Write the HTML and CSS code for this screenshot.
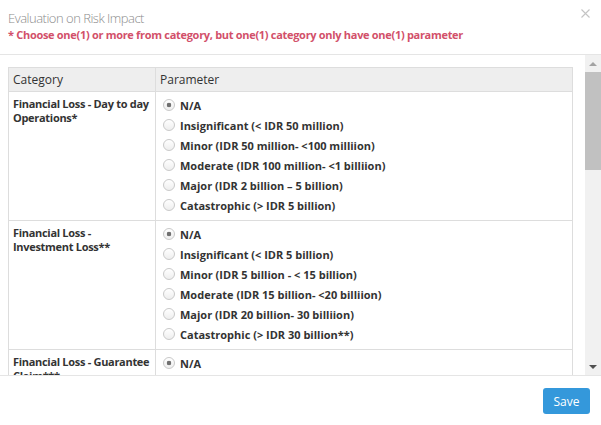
FILE: index.html
```html
<!DOCTYPE html>
<html lang="en">
<head>
<meta charset="utf-8">
<title>Evaluation on Risk Impact</title>
<link rel="stylesheet" href="styles.css">
</head>
<body>
<div class="modal">
  <div class="modal-header">
    <div class="titles">
      <h4 class="modal-title">Evaluation on Risk Impact</h4>
      <p class="modal-note">* Choose one(1) or more from category, but one(1) category only have one(1) parameter</p>
    </div>
    <button class="close" aria-label="Close">
      <svg width="9" height="9" viewBox="0 0 9 9"><path d="M0.5 0.5 L8.5 8.5 M8.5 0.5 L0.5 8.5" stroke="#c4c4c4" stroke-width="1.1" fill="none"/></svg>
    </button>
  </div>
  <div class="modal-body">
    <div class="viewport">
      <table class="risk-table">
        <thead>
          <tr><th class="col-cat">Category</th><th>Parameter</th></tr>
        </thead>
        <tbody>
          <tr>
            <td class="cat">Financial Loss - Day to day Operations*</td>
            <td>
              <label class="opt"><input type="radio" name="r1" checked> N/A</label>
              <label class="opt"><input type="radio" name="r1"> Insignificant (&lt; IDR 50 million)</label>
              <label class="opt"><input type="radio" name="r1"> Minor (IDR 50 million- &lt;100 milliion)</label>
              <label class="opt"><input type="radio" name="r1"> Moderate (IDR 100 million- &lt;1 billiion)</label>
              <label class="opt"><input type="radio" name="r1"> Major (IDR 2 billion – 5 billion)</label>
              <label class="opt"><input type="radio" name="r1"> Catastrophic (&gt; IDR 5 billion)</label>
            </td>
          </tr>
          <tr>
            <td class="cat">Financial Loss - Investment Loss**</td>
            <td>
              <label class="opt"><input type="radio" name="r2" checked> N/A</label>
              <label class="opt"><input type="radio" name="r2"> Insignificant (&lt; IDR 5 billion)</label>
              <label class="opt"><input type="radio" name="r2"> Minor (IDR 5 billion - &lt; 15 billion)</label>
              <label class="opt"><input type="radio" name="r2"> Moderate (IDR 15 billion- &lt;20 billiion)</label>
              <label class="opt"><input type="radio" name="r2"> Major (IDR 20 billion- 30 billiion)</label>
              <label class="opt"><input type="radio" name="r2"> Catastrophic (&gt; IDR 30 billion**)</label>
            </td>
          </tr>
          <tr>
            <td class="cat">Financial Loss - Guarantee Claim***</td>
            <td>
              <label class="opt"><input type="radio" name="r3" checked> N/A</label>
              <label class="opt"><input type="radio" name="r3"> Insignificant (&lt; IDR 5 billion)</label>
              <label class="opt"><input type="radio" name="r3"> Minor (IDR 5 billion - &lt; 15 billion)</label>
              <label class="opt"><input type="radio" name="r3"> Moderate (IDR 15 billion- &lt;20 billiion)</label>
              <label class="opt"><input type="radio" name="r3"> Major (IDR 20 billion- 30 billiion)</label>
              <label class="opt"><input type="radio" name="r3"> Catastrophic (&gt; IDR 30 billion)</label>
            </td>
          </tr>
        </tbody>
      </table>
    </div>
    <div class="scrollbar" aria-hidden="true">
      <div class="sb-btn sb-up"><svg width="8" height="4" viewBox="0 0 8 4"><polygon points="0,4 8,4 4,0" fill="#a3a3a3"/></svg></div>
      <div class="sb-thumb"></div>
      <div class="sb-track"></div>
      <div class="sb-btn sb-down"><svg width="8" height="4" viewBox="0 0 8 4"><polygon points="0,0 8,0 4,4" fill="#505050"/></svg></div>
    </div>
  </div>
  <div class="modal-footer">
    <button class="btn-save">Save</button>
  </div>
</div>
</body>
</html>
```
FILE: styles.css
```css
* { box-sizing: border-box; }
html, body { margin: 0; padding: 0; background: #fff; }
body {
  font-family: "Open Sans", "Liberation Sans", sans-serif;
  color: #333;
  width: 601px;
  height: 425px;
  overflow: hidden;
}
.modal { display: flex; flex-direction: column; height: 425px; }

.modal-header {
  display: flex;
  justify-content: space-between;
  align-items: flex-start;
  height: 55px;
  padding: 9px 11px 0 8px;
  border-bottom: 1px solid #e5e5e5;
}
.modal-title {
  margin: 0;
  font-family: "Open Sans", "Liberation Sans", sans-serif;
  font-size: 13px;
  font-weight: 300;
  line-height: 19px;
  letter-spacing: -0.5px;
  color: #8c8c8c;
}
.modal-note {
  margin: 0;
  font-size: 11px;
  font-weight: 700;
  line-height: 14px;
  letter-spacing: -0.3px;
  color: #d2506a;
}
.close {
  border: 0;
  background: none;
  padding: 0;
  margin-top: 0;
  width: 9px;
  height: 9px;
  display: flex;
}

.modal-body {
  height: 320px;
  flex: none;
  display: flex;
}
.viewport {
  flex: 1;
  overflow: hidden;
  padding: 12px 12px 0 8px;
}
.scrollbar {
  width: 16px;
  flex: none;
  display: flex;
  flex-direction: column;
  background: #f1f1f1;
}
.sb-btn {
  height: 17px;
  flex: none;
  display: flex;
  align-items: center;
  justify-content: center;
}
.sb-thumb {
  height: 98px;
  flex: none;
  background: #c1c1c1;
}
.sb-track { flex: 1; }

.risk-table {
  width: 100%;
  border-collapse: collapse;
  border: 1px solid #ddd;
}
.risk-table th {
  background: #eee;
  font-weight: 400;
  font-size: 12px;
  text-align: left;
  height: 24px;
  padding: 0 4px;
  border: 1px solid #ddd;
  color: #333;
}
.risk-table td {
  vertical-align: top;
  border: 1px solid #ddd;
  padding: 3px 4px 5px 4px;
}
.col-cat { width: 147px; }
.risk-table td.cat {
  font-size: 11px;
  font-weight: 700;
  line-height: 14px;
  letter-spacing: -0.3px;
  padding: 5px 4px 4px 4px;
}
.opt {
  display: flex;
  align-items: center;
  height: 20px;
  gap: 5px;
  padding-left: 3px;
  font-size: 11px;
  font-weight: 700;
  white-space: nowrap;
}
.opt input {
  appearance: none;
  -webkit-appearance: none;
  margin: 0;
  width: 12px;
  height: 12px;
  border: 1px solid #c9c9c9;
  border-radius: 50%;
  background: linear-gradient(#fff, #eee);
  flex: none;
}
.opt input:checked {
  background: radial-gradient(circle, #707070 0 2px, transparent 2.6px), linear-gradient(#fff, #eee);
}

.modal-footer {
  flex: 1;
  display: flex;
  justify-content: flex-end;
  align-items: flex-start;
  border-top: 1px solid #e5e5e5;
  padding: 12px 11px 0 0;
}
.btn-save {
  width: 47px;
  height: 26px;
  background: #3498db;
  color: #fff;
  border: 0;
  border-radius: 3px;
  font-family: "Open Sans", "Liberation Sans", sans-serif;
  font-size: 12px;
  padding: 0;
}
```
